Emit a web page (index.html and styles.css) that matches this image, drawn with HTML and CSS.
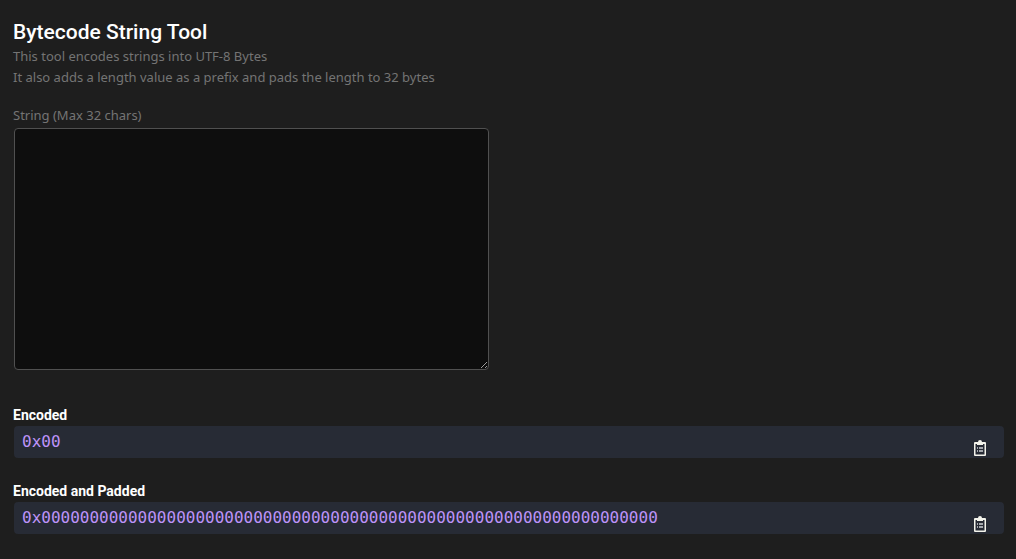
FILE: index.html
```html
<!DOCTYPE html>
<html lang="en">
<head>
<meta charset="utf-8">
<meta name="viewport" content="width=device-width, initial-scale=1">
<title>Bytecode String Tool</title>
<link rel="stylesheet" href="styles.css">
</head>
<body>
<main class="tool">
  <header class="intro">
    <h1 class="title">Bytecode String Tool</h1>
    <p class="description">This tool encodes strings into UTF-8 Bytes<br>It also adds a length value as a prefix and pads the length to 32 bytes</p>
  </header>
  <div class="field">
    <label class="field-label" for="source">String (Max 32 chars)</label>
    <textarea class="field-input" id="source" maxlength="32"></textarea>
  </div>
  <section class="result">
    <h2 class="result-title">Encoded</h2>
    <div class="result-box">
      <output class="result-value">0x00</output>
      <button class="copy" type="button" aria-label="Copy encoded value">
        <svg class="copy-icon" viewBox="0 0 12 16" aria-hidden="true"><path fill="#f4f4ec" fill-rule="evenodd" d="M4 2a2 2 0 0 1 4 0h3q1 0 1 1V15q0 1-1 1H1q-1 0-1-1V3q0-1 1-1zM1.500 4v10.500h9V4H9v1H3V4z"/><path fill="#a5a8ad" d="M3 7h1v2H3zm2 0h4v2H5zM3 10h1v2H3zm2 0h4v2H5z"/></svg>
      </button>
    </div>
  </section>
  <section class="result">
    <h2 class="result-title">Encoded and Padded</h2>
    <div class="result-box">
      <output class="result-value">0x0000000000000000000000000000000000000000000000000000000000000000</output>
      <button class="copy" type="button" aria-label="Copy padded value">
        <svg class="copy-icon" viewBox="0 0 12 16" aria-hidden="true"><path fill="#f4f4ec" fill-rule="evenodd" d="M4 2a2 2 0 0 1 4 0h3q1 0 1 1V15q0 1-1 1H1q-1 0-1-1V3q0-1 1-1zM1.500 4v10.500h9V4H9v1H3V4z"/><path fill="#a5a8ad" d="M3 7h1v2H3zm2 0h4v2H5zM3 10h1v2H3zm2 0h4v2H5z"/></svg>
      </button>
    </div>
  </section>
</main>
</body>
</html>
```
FILE: styles.css
```css
* {
  box-sizing: border-box;
}

body {
  margin: 0;
  background: #1e1e1e;
  color: #fff;
  font-family: Roboto, "Liberation Sans", sans-serif;
  font-size: 14px;
  line-height: 21px;
}

.tool {
  padding: 18px 12px 24px 13px;
}

.title,
.result-title,
.description {
  margin: 0;
}

.title {
  font-size: 21px;
  font-weight: 500;
  line-height: 28px;
}

.description,
.field-label {
  color: #747474;
  font-family: "Noto Sans", Roboto, sans-serif;
  font-size: 13px;
  font-weight: 400;
}

.field {
  display: flex;
  flex-direction: column;
  width: 48%;
  margin: 17px 0 34px;
}

.field-label {
  margin-bottom: 2px;
}

.field-input {
  height: 242px;
  margin-left: 1px;
  padding: 8px;
  border: 1px solid #505050;
  border-radius: 4px;
  background: #0e0e0e;
  color: #fff;
  font: inherit;
  resize: vertical;
}

.result + .result {
  margin-top: 22px;
}

.result-title {
  font-size: 14px;
  font-weight: 700;
  line-height: 22px;
}

.result-box {
  display: flex;
  justify-content: space-between;
  height: 32px;
  margin-left: 1px;
  padding: 0 18px 0 8px;
  border-radius: 4px;
  background: #272b35;
}

.result-value {
  color: #bd93f9;
  font-family: "DejaVu Sans Mono", monospace;
  font-size: 16px;
  line-height: 32px;
}

.copy {
  display: flex;
  align-self: flex-end;
  padding: 0 0 2px;
  border: 0;
  background: none;
  cursor: pointer;
}

.copy-icon {
  width: 12px;
  height: 16px;
}
```
